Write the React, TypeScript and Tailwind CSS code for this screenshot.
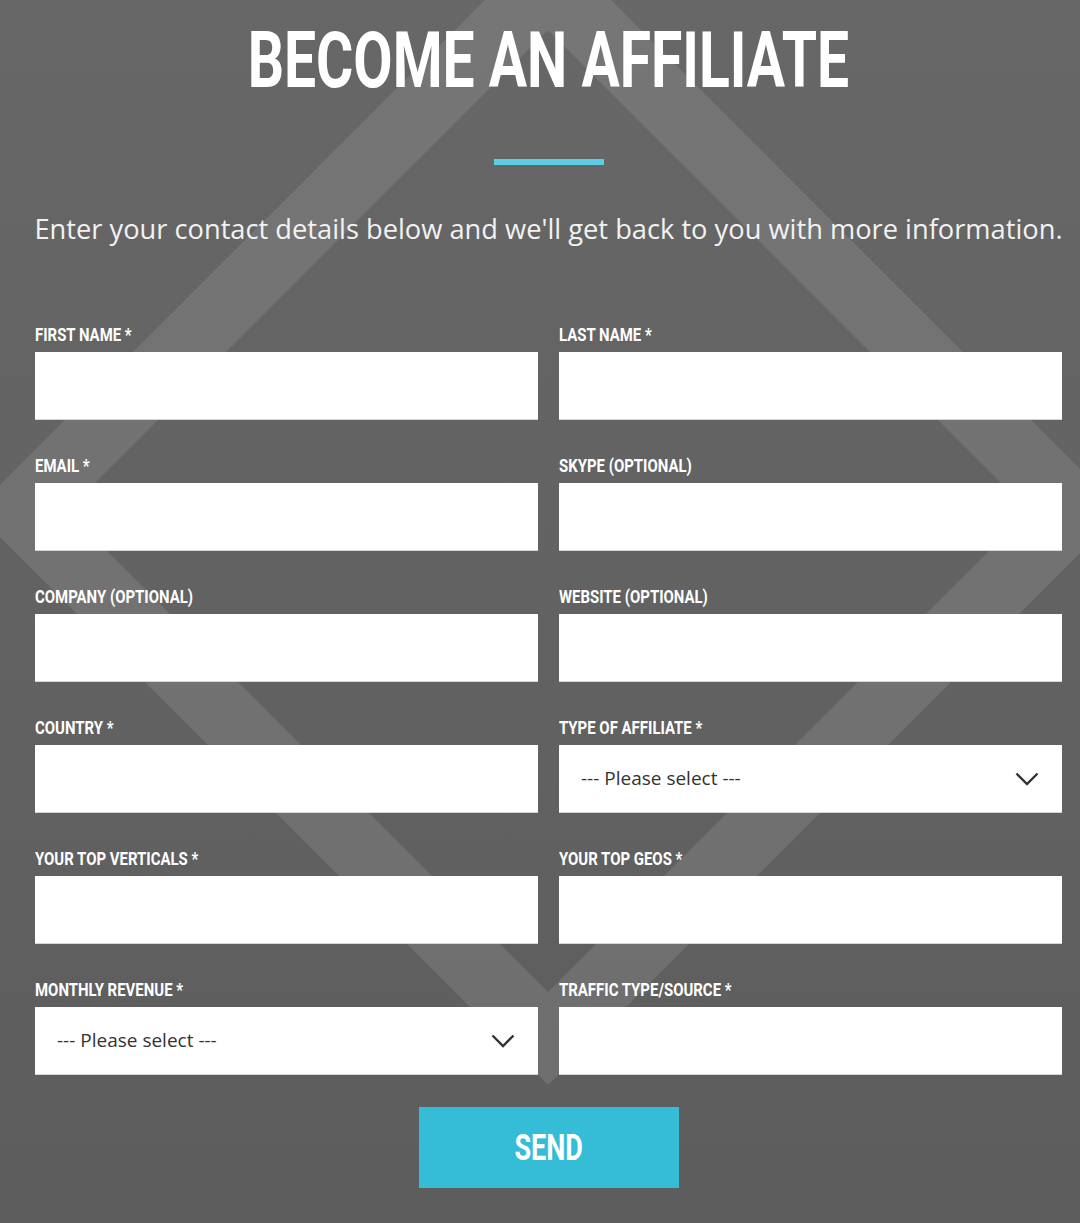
import React from "react";

type Field = { label: string; select?: boolean };

const rows: Field[][] = [
  [{ label: "FIRST NAME *" }, { label: "LAST NAME *" }],
  [{ label: "EMAIL *" }, { label: "SKYPE (OPTIONAL)" }],
  [{ label: "COMPANY (OPTIONAL)" }, { label: "WEBSITE (OPTIONAL)" }],
  [{ label: "COUNTRY *" }, { label: "TYPE OF AFFILIATE *", select: true }],
  [{ label: "YOUR TOP VERTICALS *" }, { label: "YOUR TOP GEOS *" }],
  [{ label: "MONTHLY REVENUE *", select: true }, { label: "TRAFFIC TYPE/SOURCE *" }],
];

const Chevron = () => (
  <svg width="24" height="14" viewBox="0 0 24 14" fill="none">
    <polyline points="1.5,1.5 12,12 22.5,1.5" stroke="#333" strokeWidth="2.4" />
  </svg>
);

const FormField: React.FC<{ field: Field }> = ({ field }) => (
  <div className="flex flex-col">
    <label className="h-[18px] mb-[8px] text-white font-bold text-[18px] leading-none whitespace-nowrap font-['Roboto',sans-serif]">
      <span className="inline-block origin-left scale-x-[0.83]">{field.label}</span>
    </label>
    {field.select ? (
      <div className="h-[68px] bg-white border-b border-[#d6d6d6] flex items-center justify-between pl-[22px] pr-[23px]">
        <span className="text-[19px] text-[#333] font-['Open_Sans',sans-serif]">--- Please select ---</span>
        <Chevron />
      </div>
    ) : (
      <input type="text" className="h-[68px] bg-white border-b border-[#d6d6d6] outline-none px-4" />
    )}
  </div>
);

const App: React.FC = () => {
  return (
    <div className="relative min-h-[1223px] w-full overflow-hidden bg-gradient-to-b from-[#676767] to-[#5d5d5d]">
      <svg className="absolute inset-0" width="1080" height="1223" viewBox="0 0 1080 1223">
        <path
          fillRule="evenodd"
          fill="#ffffff"
          fillOpacity="0.1"
          d="M548 -63 L1122 511 L548 1085 L-26 511 Z M548 30 L67 511 L548 992 L1029 511 Z"
        />
      </svg>

      <div className="relative ml-[35px] w-[1027px] flex flex-col items-center">
        <h1 className="mt-[23px] h-[77px] text-white font-bold text-[77px] leading-none whitespace-nowrap font-['Roboto',sans-serif]">
          <span className="inline-block scale-x-[0.74]">BECOME AN AFFILIATE</span>
        </h1>
        <div className="mt-[59px] w-[110px] h-[6px] bg-[#5ccde5]" />
        <p className="mt-[46px] text-[27.25px] leading-[36px] whitespace-nowrap text-[#f2f2f2] font-['Open_Sans',sans-serif]">
          Enter your contact details below and we'll get back to you with more information.
        </p>

        <form className="mt-[79px] w-full grid grid-cols-2 gap-x-[21px] gap-y-[37px]">
          {rows.flat().map((f) => (
            <FormField key={f.label} field={f} />
          ))}
        </form>

        <button className="mt-[32px] w-[260px] h-[81px] bg-[#35bcd6] text-white font-bold text-[36px] leading-none font-['Roboto',sans-serif]">
          <span className="inline-block scale-x-[0.75]">SEND</span>
        </button>
      </div>
    </div>
  );
};

export default App;
